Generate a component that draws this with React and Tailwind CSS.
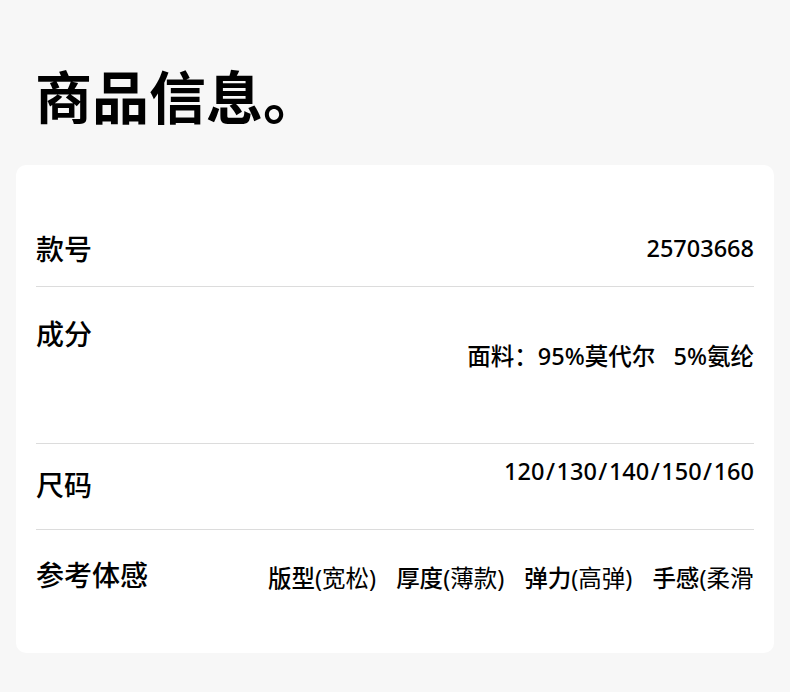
const font = { fontFamily: '"Noto Sans CJK SC", "Noto Sans", sans-serif' };
const valFont = { fontFamily: '"Noto Sans", "Noto Sans CJK SC", sans-serif' };

const Row = ({ label, children, className, labelClass, valueClass, last }) => (
  <div className={`flex justify-between items-start ${last ? '' : 'border-b border-[#dcdcdc]'} ${className}`}>
    <div className={`shrink-0 text-[28px] leading-[36px] font-medium text-black ${labelClass}`}>{label}</div>
    <div
      className={`min-w-0 overflow-hidden whitespace-nowrap text-[23.5px] leading-[36px] font-medium text-black ${valueClass}`}
      style={valFont}
    >
      {children}
    </div>
  </div>
);

const Feel = ({ name, val }) => (
  <span className="mr-[20px] shrink-0">
    <span className="font-medium">{name}</span>
    <span className="font-normal">({val})</span>
  </span>
);

const sizes = ['120', '130', '140', '150', '160'];

export default function App() {
  return (
    <div
      className="w-[790px] h-[692px] bg-[#f7f7f7] overflow-hidden flex flex-col"
      style={font}
    >
      <h1 className="pl-[35px] pt-[64px] text-[57px] leading-[60px] font-bold text-black">
        商品信息。
      </h1>
      <div className="mx-[16px] mt-[41px] h-[488px] bg-white rounded-[10px] px-[20px]">
        <Row label="款号" className="h-[122px] pt-[65px]">
          25703668
        </Row>
        <Row label="成分" className="h-[157px] pt-[28px]" valueClass="mt-[23px]">
          面料：95%莫代尔&nbsp;&nbsp;&nbsp;5%氨纶
        </Row>
        <Row label="尺码" className="h-[86px] pt-[9px]" labelClass="mt-[13px]">
          {sizes.map((s, i) => (
            <span key={s}>
              {i > 0 && <span className="mx-[1.5px]">/</span>}
              {s}
            </span>
          ))}
        </Row>
        <Row label="参考体感" className="h-[123px] pt-[26px]" valueClass="mt-[4px] w-[486px] flex" last>
          <Feel name="版型" val="宽松" />
          <Feel name="厚度" val="薄款" />
          <Feel name="弹力" val="高弹" />
          <Feel name="手感" val="柔滑" />
        </Row>
      </div>
    </div>
  );
}
